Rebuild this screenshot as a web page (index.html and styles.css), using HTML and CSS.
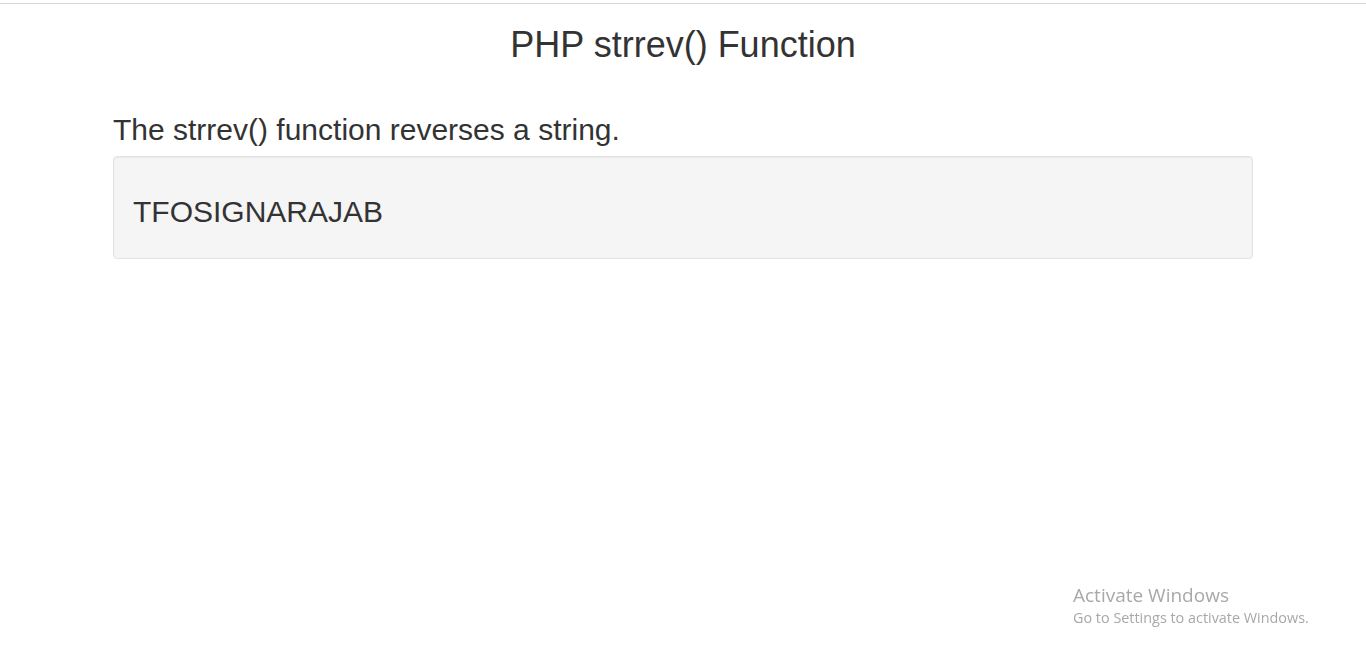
FILE: index.html
```html
<!DOCTYPE html>
<html lang="en">
<head>
<meta charset="utf-8">
<title>PHP strrev() Function</title>
<link rel="stylesheet" href="styles.css">
</head>
<body>
<div class="topline"></div>
<main class="container">
  <h1 class="title">PHP strrev() Function</h1>
  <h3 class="lead">The strrev() function reverses a string.</h3>
  <div class="well">
    <h3 class="result">TFOSIGNARAJAB</h3>
  </div>
</main>
<div class="activate">
  <div class="act-title">Activate Windows</div>
  <div class="act-sub">Go to Settings to activate Windows.</div>
</div>
</body>
</html>
```
FILE: styles.css
```css
html, body {
  margin: 0;
  padding: 0;
  background: #fff;
}
body {
  font-family: "Liberation Sans", Arial, Helvetica, sans-serif;
  color: #333;
}
.topline {
  height: 3px;
  border-bottom: 1px solid #d6d6d6;
}
.container {
  width: 1140px;
  margin: 0 auto;
  padding: 0 15px;
}
.title {
  margin: 21px 0 0;
  font-size: 36px;
  font-weight: 500;
  line-height: 1.1;
  text-align: center;
}
.lead {
  margin: 48px 0 0;
  font-size: 30px;
  font-weight: 500;
  line-height: 1.1;
}
.well {
  margin-top: 10px;
  padding: 0 19px;
  background: #f5f5f5;
  border: 1px solid #e3e3e3;
  border-radius: 4px;
  box-shadow: inset 0 1px 1px rgba(0,0,0,.05);
  min-height: 100px;
  box-sizing: border-box;
  display: flow-root;
}
.result {
  margin: 38px 0 30px;
  font-size: 30px;
  font-weight: 500;
  line-height: 1.1;
}
.activate {
  position: fixed;
  left: 1073px;
  top: 583px;
  font-family: "Open Sans", "Noto Sans", sans-serif;
  color: #a8a8a8;
}
.act-title {
  font-size: 19px;
  line-height: 25px;
}
.act-sub {
  font-size: 14.4px;
  line-height: 20px;
}
```
